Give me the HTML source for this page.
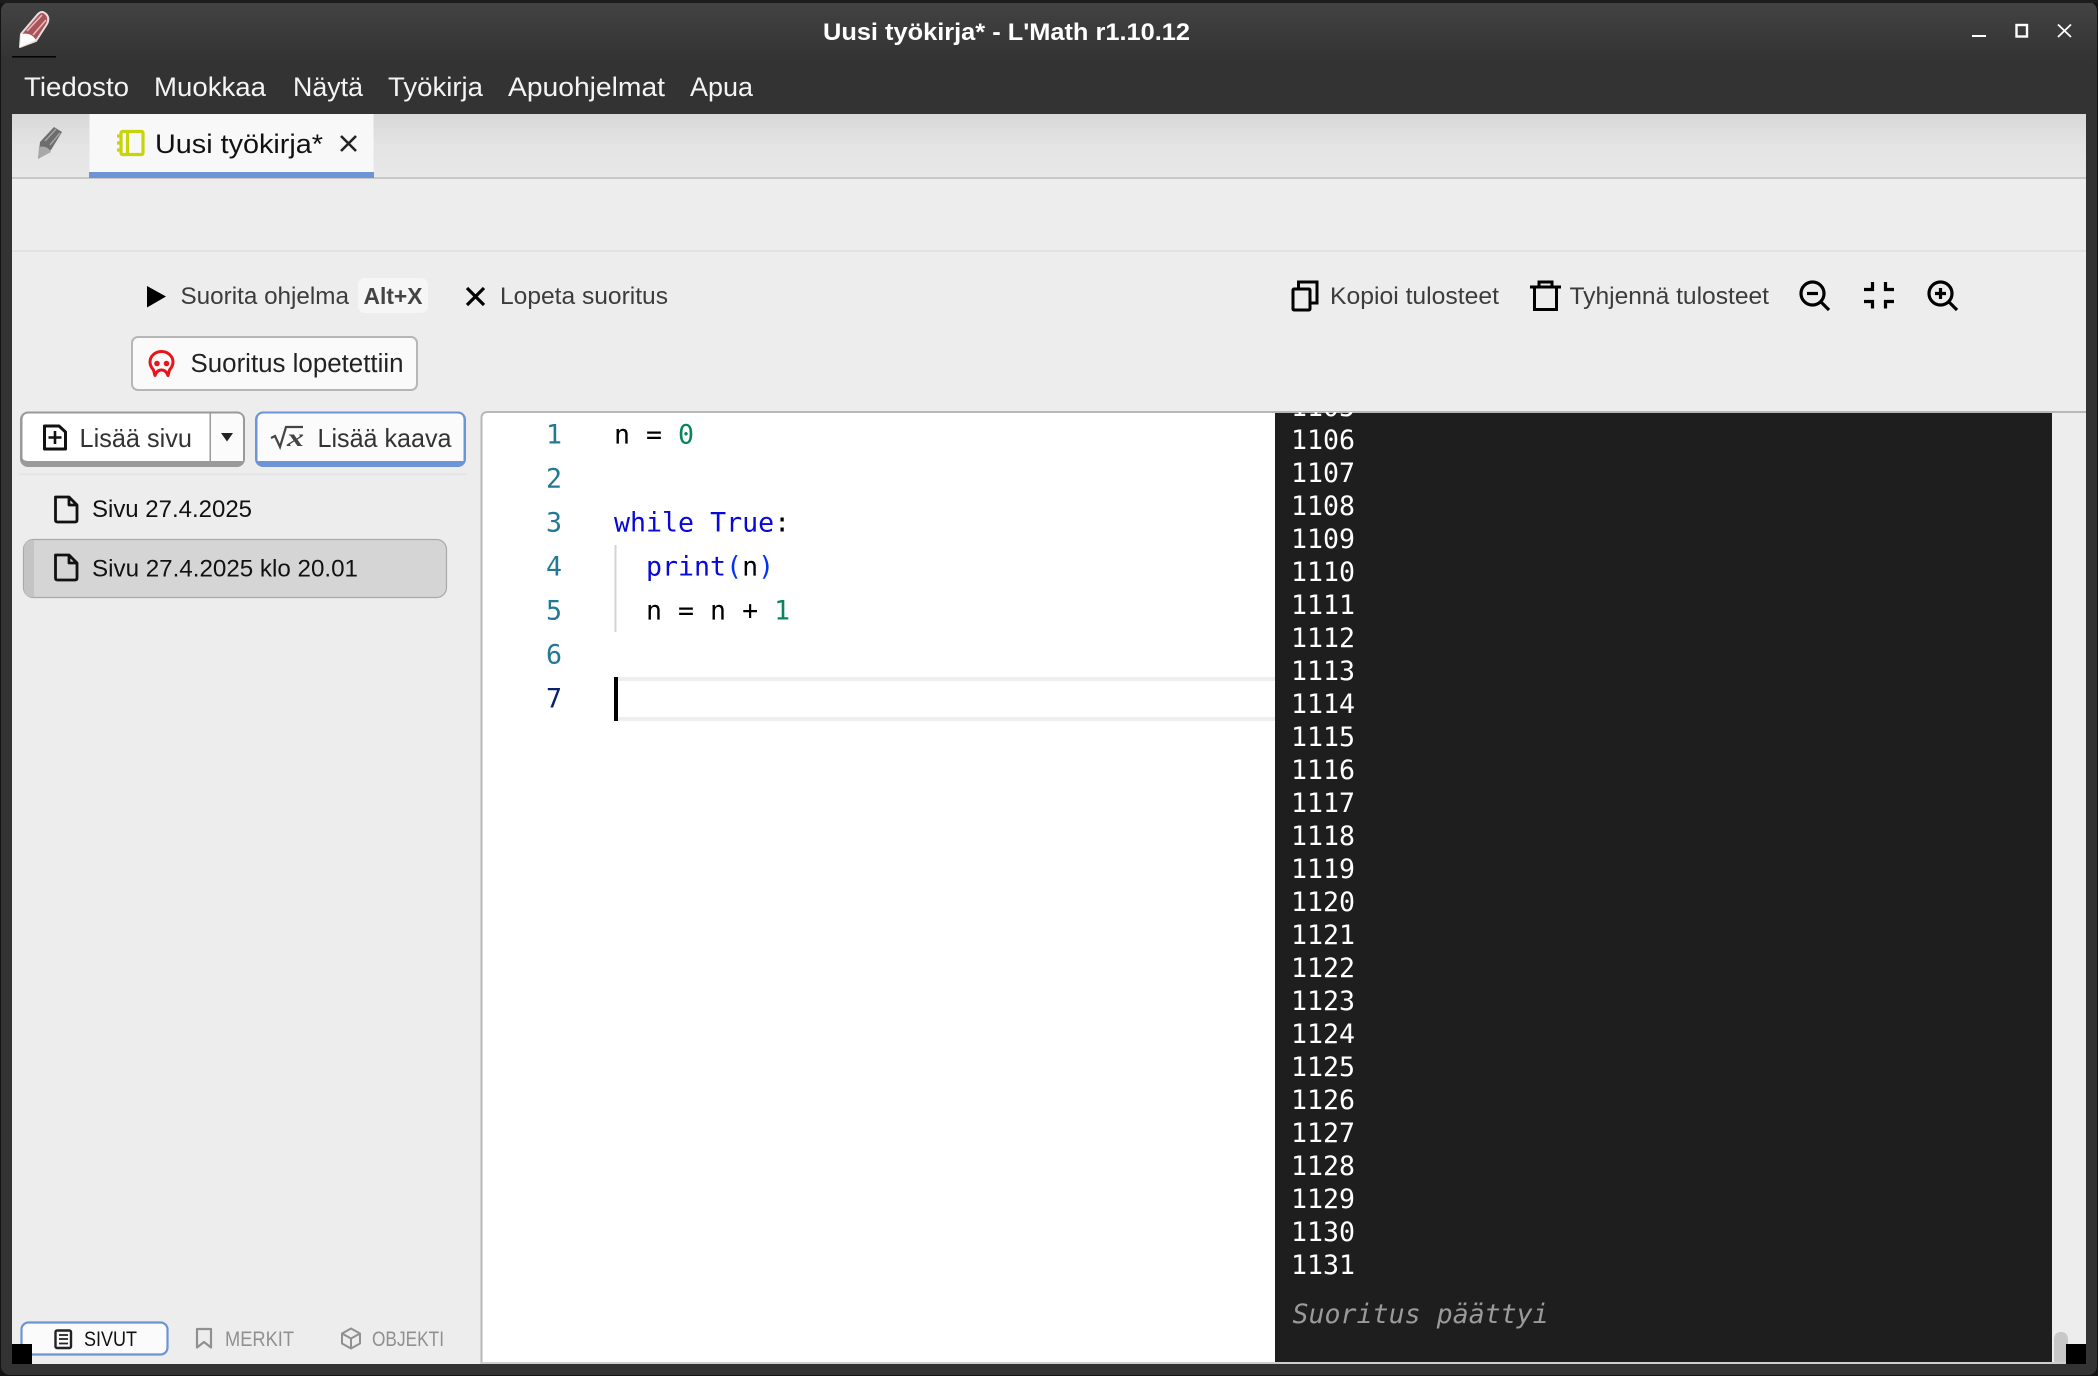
<!DOCTYPE html>
<html lang="fi"><head><meta charset="utf-8"><title>Uusi työkirja* - L'Math r1.10.12</title>
<style>
html,body{margin:0;padding:0;background:#000;width:2098px;height:1376px;overflow:hidden}
svg{display:block}
.s{font-family:"Liberation Sans",sans-serif}
.m{font-family:"DejaVu Sans Mono",monospace;font-size:26.6px}
.o{fill:#fff}
.ln{fill:#237893}
</style></head><body>
<svg width="2098" height="1376" viewBox="0 0 2098 1376" xmlns="http://www.w3.org/2000/svg">
<defs>
<linearGradient id="tb" x1="0" y1="0" x2="0" y2="1"><stop offset="0" stop-color="#434343"/><stop offset="1" stop-color="#333333"/></linearGradient>
<linearGradient id="tabs" x1="0" y1="0" x2="0" y2="1"><stop offset="0" stop-color="#d8d8d8"/><stop offset=".5" stop-color="#e4e4e4"/><stop offset="1" stop-color="#e8e8e8"/></linearGradient>
<clipPath id="oc"><rect x="1275" y="412" width="777" height="950"/></clipPath>
</defs>
<rect width="2098" height="1376" fill="#141414"/>
<rect x="1" y="2" width="2096" height="1373" rx="9" fill="#333"/>
<rect x="1" y="2" width="2096" height="58" rx="9" fill="url(#tb)"/>
<rect x="0" y="0" width="2098" height="3" fill="#1c1c1c"/>

<!-- logo -->
<path d="M21 34 L38 14 Q42 10 46 14 Q50 18 47 24 L36 41 L20 47 Z" fill="#a9545a" stroke="#eadede" stroke-width="2" stroke-linejoin="round"/>
<path d="M27 31 L42 15 M33 35 L46 20" stroke="#e5b9b9" stroke-width="1.6"/>
<path d="M21 34 L20 47 L36 40 Q31 32 21 34 Z" fill="#fff"/>
<rect x="12" y="56" width="44" height="1.6" fill="#050505"/>

<text class="s" x="823" y="40" font-size="24.5" font-weight="bold" fill="#fff" textLength="367" lengthAdjust="spacingAndGlyphs">Uusi työkirja* - L'Math r1.10.12</text>
<rect x="1972" y="35" width="14" height="2" fill="#fff"/>
<rect x="2016.5" y="25" width="10.5" height="11.5" fill="none" stroke="#fff" stroke-width="2.4"/>
<path d="M2058 24.5 L2071 37 M2071 24.5 L2058 37" stroke="#fff" stroke-width="1.8"/>

<g class="s" font-size="26.6" fill="#f4f4f4">
<text x="24" y="96" textLength="105" lengthAdjust="spacingAndGlyphs">Tiedosto</text>
<text x="154" y="96" textLength="112" lengthAdjust="spacingAndGlyphs">Muokkaa</text>
<text x="293" y="96" textLength="70" lengthAdjust="spacingAndGlyphs">Näytä</text>
<text x="388" y="96" textLength="95" lengthAdjust="spacingAndGlyphs">Työkirja</text>
<text x="508" y="96" textLength="157" lengthAdjust="spacingAndGlyphs">Apuohjelmat</text>
<text x="690" y="96" textLength="63" lengthAdjust="spacingAndGlyphs">Apua</text>
</g>

<!-- main surface -->
<rect x="12" y="114" width="2074" height="1250" fill="#ededed"/>
<rect x="12" y="114" width="2074" height="64" fill="url(#tabs)"/>
<rect x="12" y="177" width="2074" height="2" fill="#c9c9c9"/>
<rect x="12" y="250" width="2074" height="2" fill="#e2e2e2"/>

<!-- gray pencil -->
<path d="M40 142 L54 127 L62 132 L51 150 L38 159 Z" fill="#6d6d6d"/>
<path d="M39 147 L38 159 L51 152 Q47 145 39 147 Z" fill="#a8a8a8"/>
<path d="M45 141 L56 129 M50 145 L60 133" stroke="#a5a5a5" stroke-width="1.4"/>

<!-- active tab -->
<rect x="89.500" y="114" width="284" height="58" fill="#f8f8f8"/>
<rect x="89" y="172" width="285" height="6" fill="#6d94d4"/>
<g fill="none" stroke="#c8d40a" stroke-width="3.200">
<rect x="121" y="131.500" width="22" height="23" rx="1.500"/>
<path d="M127.500 131.500 V154.500"/>
<path d="M117 136 H122 M117 143 H122 M117 150 H122"/>
</g>
<text class="s" x="155" y="153" font-size="27" fill="#111" textLength="168" lengthAdjust="spacingAndGlyphs">Uusi työkirja*</text>
<path d="M341 136 L356 151 M356 136 L341 151" stroke="#222" stroke-width="2.6"/>

<!-- toolbar left -->
<path d="M147 286 L166 296.500 L147 307.500 Z" fill="#000"/>
<text class="s" x="180.500" y="304" font-size="24.5" fill="#3c3c3c" textLength="168.500" lengthAdjust="spacingAndGlyphs">Suorita ohjelma</text>
<rect x="358" y="278" width="70" height="35" rx="7" fill="#f6f6f6"/>
<text class="s" x="363.500" y="304" font-size="23.5" font-weight="bold" fill="#444" textLength="59" lengthAdjust="spacingAndGlyphs">Alt+X</text>
<path d="M467 288 L484 305 M484 288 L467 305" stroke="#000" stroke-width="3.2"/>
<text class="s" x="500" y="304" font-size="24.5" fill="#3c3c3c" textLength="168" lengthAdjust="spacingAndGlyphs">Lopeta suoritus</text>

<rect x="132" y="337" width="285" height="53" rx="6" fill="#fafafa" stroke="#b6b6b6" stroke-width="2"/>
<path d="M153.500 370 Q150 366 150 362 A 11.500 10.500 0 0 1 173 362 Q173 366 169.500 370 L168 375.500 Q166 370 161.500 370 Q157 370 155 375.500 Z" fill="none" stroke="#e8141a" stroke-width="3" stroke-linejoin="round"/>
<circle cx="157" cy="363.500" r="2.800" fill="#e8141a"/><circle cx="166.500" cy="363.500" r="2.800" fill="#e8141a"/>
<text class="s" x="190.500" y="372" font-size="25.500" fill="#222" textLength="213" lengthAdjust="spacingAndGlyphs">Suoritus lopetettiin</text>

<!-- toolbar right -->
<g fill="none" stroke="#000" stroke-width="3">
<rect x="1293" y="289" width="17" height="21" rx="1"/>
<path d="M1298.500 289 V282 H1317 V303 H1310.500"/>
</g>
<text class="s" x="1330" y="304" font-size="24.500" fill="#3c3c3c" textLength="169" lengthAdjust="spacingAndGlyphs">Kopioi tulosteet</text>
<g fill="none" stroke="#000" stroke-width="3">
<path d="M1534.500 288 V309.500 H1556.500 V288"/>
<path d="M1530 287 H1561"/>
<path d="M1539 287 V282 H1552 V287"/>
</g>
<text class="s" x="1569.500" y="304" font-size="24.500" fill="#3c3c3c" textLength="199.500" lengthAdjust="spacingAndGlyphs">Tyhjennä tulosteet</text>
<g fill="none" stroke="#000" stroke-width="3.200">
<circle cx="1812.500" cy="293.500" r="11.500"/><path d="M1821 302 L1829 310"/><path d="M1807 293.500 H1818"/>
<circle cx="1940.500" cy="293.500" r="11.500"/><path d="M1949 302 L1957 310"/><path d="M1935 293.500 H1946 M1940.500 288 V299"/>
<path d="M1872.500 282 V289.500 H1864 M1885.500 282 V289.500 H1894 M1872.500 308.500 V301.500 H1864 M1885.500 308.500 V301.500 H1894"/>
</g>

<!-- sidebar buttons -->
<rect x="20" y="411.500" width="225" height="55.500" rx="8" fill="#9a9a9a"/>
<path d="M22.500 420 Q22.500 413.500 29 413.500 H210 V461 H29 Q23 461 22.500 458 Z" fill="#fff"/>
<path d="M210 413.500 H236.500 Q243 413.500 243 420 V461 H210 Z" fill="#fbfbfb"/>
<rect x="209.500" y="413.500" width="1.500" height="48" fill="#9a9a9a"/>
<path d="M221 433 H233 L227 441.500 Z" fill="#222"/>
<path d="M44.500 426 H59 L65.500 432 V449 H44.500 Z" fill="none" stroke="#111" stroke-width="3" stroke-linejoin="round"/>
<path d="M55 431 V444 M48.500 437.500 H61.500" stroke="#111" stroke-width="2.600"/>
<text class="s" x="79.500" y="447" font-size="26" fill="#333" textLength="112.500" lengthAdjust="spacingAndGlyphs">Lisää sivu</text>

<rect x="255" y="411.500" width="211" height="55.500" rx="8" fill="#6d94d4"/>
<path d="M257.500 420 Q257.500 413.500 264 413.500 H457 Q463.500 413.500 463.500 420 V461 H257.500 Z" fill="#fbfbfb"/>
<path d="M271 438 L275 436 L280 447 L286 427 H303" fill="none" stroke="#444" stroke-width="2.200"/>
<text x="287" y="446" font-family="Liberation Serif,serif" font-style="italic" font-weight="bold" font-size="25" fill="#444" textLength="17" lengthAdjust="spacingAndGlyphs">x</text>
<text class="s" x="317.500" y="447" font-size="26" fill="#333" textLength="134" lengthAdjust="spacingAndGlyphs">Lisää kaava</text>
<rect x="19" y="473.500" width="448" height="1.500" fill="#e2e2e2"/>

<path d="M55.500 497 H69 L77 505 V520 Q77 522 75 522 H57.500 Q55.500 522 55.500 520 Z M69 497 V505 H77" fill="none" stroke="#111" stroke-width="2.800" stroke-linejoin="round"/>
<text class="s" x="92" y="517" font-size="24.500" fill="#111" textLength="160" lengthAdjust="spacingAndGlyphs">Sivu 27.4.2025</text>

<rect x="23.500" y="539.500" width="423" height="58" rx="10" fill="#d5d5d5" stroke="#a9a9a9" stroke-width="1.200"/>
<path d="M24 549.500 Q24 540 33 540 H34 V597 H33 Q24 597 24 588 Z" fill="#c4c4c4"/>
<path d="M55.500 555 H69 L77 563 V578 Q77 580 75 580 H57.500 Q55.500 580 55.500 578 Z M69 555 V563 H77" fill="none" stroke="#111" stroke-width="2.800" stroke-linejoin="round"/>
<text class="s" x="92" y="576.500" font-size="24.500" fill="#111" textLength="266" lengthAdjust="spacingAndGlyphs">Sivu 27.4.2025 klo 20.01</text>

<!-- sidebar bottom tabs -->
<rect x="21.500" y="1322.500" width="146" height="32" rx="7" fill="#fbfbfb" stroke="#6d94d4" stroke-width="2.200"/>
<rect x="55.500" y="1330.500" width="15.500" height="17.500" rx="1.500" fill="none" stroke="#222" stroke-width="2.400"/>
<path d="M59 1335 H68 M59 1339 H68 M59 1343.500 H68" stroke="#222" stroke-width="1.800"/>
<text class="s" x="84" y="1346" font-size="21" fill="#111" textLength="53" lengthAdjust="spacingAndGlyphs">SIVUT</text>
<path d="M197 1329 H211 V1347.500 L204 1342 L197 1347.500 Z" fill="none" stroke="#909090" stroke-width="2.200" stroke-linejoin="round"/>
<text class="s" x="225" y="1346" font-size="21" fill="#909090" textLength="69" lengthAdjust="spacingAndGlyphs">MERKIT</text>
<path d="M351 1328.500 L360 1333.500 V1343.500 L351 1348.500 L342 1343.500 V1333.500 Z M342 1333.500 L351 1338.500 L360 1333.500 M351 1338.500 V1348.500" fill="none" stroke="#909090" stroke-width="2" stroke-linejoin="round"/>
<text class="s" x="372" y="1346" font-size="21" fill="#909090" textLength="72" lengthAdjust="spacingAndGlyphs">OBJEKTI</text>

<!-- editor -->
<path d="M481 1364 V418 Q481 412 487 412 H2086 V1364 Z" fill="#fff"/>
<path d="M481.500 1364 V418 Q481.500 412 488 412 H2086" fill="none" stroke="#b8b8b8" stroke-width="2"/>
<rect x="481" y="1362" width="1605" height="2" fill="#cfcfcf"/>
<g class="m">
<text class="ln" x="546" y="443.500">1</text>
<text class="ln" x="546" y="487.500">2</text>
<text class="ln" x="546" y="531.500">3</text>
<text class="ln" x="546" y="575.500">4</text>
<text class="ln" x="546" y="619.500">5</text>
<text class="ln" x="546" y="663.500">6</text>
<text x="546" y="707.500" fill="#0b216f">7</text>
<text x="614" y="443.500" fill="#000" xml:space="preserve">n = <tspan fill="#098658">0</tspan></text>
<text x="614" y="531.500" fill="#0808d8" xml:space="preserve">while True<tspan fill="#000">:</tspan></text>
<text x="646" y="575.500" fill="#0808d8" xml:space="preserve">print<tspan fill="#0431fa">(</tspan><tspan fill="#000">n</tspan><tspan fill="#0431fa">)</tspan></text>
<text x="646" y="619.500" fill="#000" xml:space="preserve">n = n + <tspan fill="#098658">1</tspan></text>
</g>
<rect x="614.500" y="545" width="2" height="87" fill="#d3d3d3"/>
<rect x="618" y="677" width="657" height="4" fill="#eeeeee"/>
<rect x="618" y="717" width="657" height="4" fill="#eeeeee"/>
<rect x="614" y="677" width="4" height="44" fill="#000"/>

<!-- output -->
<rect x="2052" y="413" width="34" height="949" fill="#ededed"/>
<rect x="1275" y="413" width="777" height="949" fill="#1e1e1e"/>
<g class="m o" clip-path="url(#oc)">
<text x="1291" y="416">1105</text>
<text x="1291" y="449">1106</text>
<text x="1291" y="482">1107</text>
<text x="1291" y="515">1108</text>
<text x="1291" y="548">1109</text>
<text x="1291" y="581">1110</text>
<text x="1291" y="614">1111</text>
<text x="1291" y="647">1112</text>
<text x="1291" y="680">1113</text>
<text x="1291" y="713">1114</text>
<text x="1291" y="746">1115</text>
<text x="1291" y="779">1116</text>
<text x="1291" y="812">1117</text>
<text x="1291" y="845">1118</text>
<text x="1291" y="878">1119</text>
<text x="1291" y="911">1120</text>
<text x="1291" y="944">1121</text>
<text x="1291" y="977">1122</text>
<text x="1291" y="1010">1123</text>
<text x="1291" y="1043">1124</text>
<text x="1291" y="1076">1125</text>
<text x="1291" y="1109">1126</text>
<text x="1291" y="1142">1127</text>
<text x="1291" y="1175">1128</text>
<text x="1291" y="1208">1129</text>
<text x="1291" y="1241">1130</text>
<text x="1291" y="1274">1131</text>
</g>
<text class="m" x="1292.500" y="1323" font-style="italic" fill="#9a9a9a">Suoritus päättyi</text>
<path d="M2054 1362 V1340 Q2054 1332 2061 1332 Q2068 1332 2068 1340 V1362 Z" fill="#c8c8c8"/>
<rect x="12" y="1344" width="20" height="20" fill="#000"/>
<rect x="2066" y="1344" width="20" height="20" fill="#000"/>
</svg>
</body></html>
